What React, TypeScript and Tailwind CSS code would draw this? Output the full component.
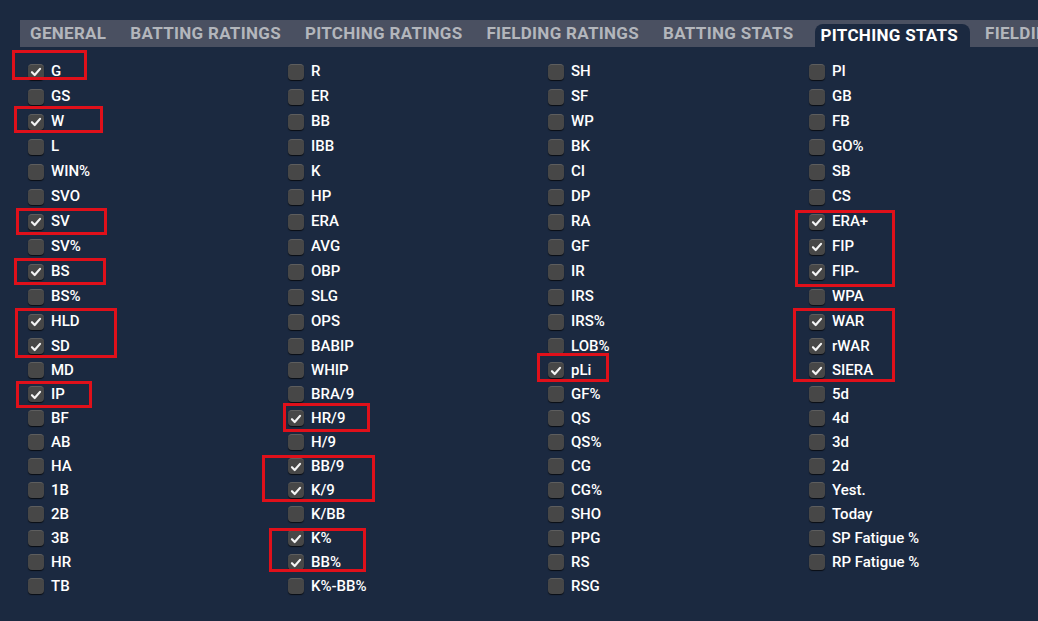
import React from 'react';

const TABS = [
  'GENERAL',
  'BATTING RATINGS',
  'PITCHING RATINGS',
  'FIELDING RATINGS',
  'BATTING STATS',
  'PITCHING STATS',
  'FIELDING STATS',
];
const ACTIVE_TAB = 'PITCHING STATS';

const COLUMNS: string[][] = [
  ['G', 'GS', 'W', 'L', 'WIN%', 'SVO', 'SV', 'SV%', 'BS', 'BS%', 'HLD', 'SD', 'MD', 'IP', 'BF', 'AB', 'HA', '1B', '2B', '3B', 'HR', 'TB'],
  ['R', 'ER', 'BB', 'IBB', 'K', 'HP', 'ERA', 'AVG', 'OBP', 'SLG', 'OPS', 'BABIP', 'WHIP', 'BRA/9', 'HR/9', 'H/9', 'BB/9', 'K/9', 'K/BB', 'K%', 'BB%', 'K%-BB%'],
  ['SH', 'SF', 'WP', 'BK', 'CI', 'DP', 'RA', 'GF', 'IR', 'IRS', 'IRS%', 'LOB%', 'pLi', 'GF%', 'QS', 'QS%', 'CG', 'CG%', 'SHO', 'PPG', 'RS', 'RSG'],
  ['PI', 'GB', 'FB', 'GO%', 'SB', 'CS', 'ERA+', 'FIP', 'FIP-', 'WPA', 'WAR', 'rWAR', 'SIERA', '5d', '4d', '3d', '2d', 'Yest.', 'Today', 'SP Fatigue %', 'RP Fatigue %'],
];

const CHECKED = new Set([
  'G', 'W', 'SV', 'BS', 'HLD', 'SD', 'IP',
  'HR/9', 'BB/9', 'K/9', 'K%', 'BB%',
  'pLi',
  'ERA+', 'FIP', 'FIP-', 'WAR', 'rWAR', 'SIERA',
]);

// annotation boxes drawn over the list: [left, top, width, height]
const MARKS: [number, number, number, number][] = [
  [12, 50, 75, 30],
  [14, 106, 89, 27],
  [16, 208, 91, 27],
  [14, 258, 92, 27],
  [15, 308, 102, 50],
  [16, 381, 76, 27],
  [283, 403, 87, 29],
  [262, 455, 113, 47],
  [269, 528, 97, 44],
  [537, 353, 72, 29],
  [795, 210, 100, 77],
  [793, 308, 102, 74],
];

const CheckBox: React.FC<{ checked: boolean }> = ({ checked }) => (
  <span className="flex h-[16px] w-[16px] shrink-0 items-center justify-center rounded-[4px] border-t border-[#5e5e5e] bg-[#474747] shadow-[0_1px_1px_rgba(0,0,0,0.7)]">
    {checked && (
      <svg viewBox="0 0 16 16" className="h-[14px] w-[14px]">
        <path d="M3.4 8.3 L6.5 11.4 L12.6 4.4" fill="none" stroke="#f4f4f4" strokeWidth="2.5" strokeLinecap="round" strokeLinejoin="round" />
      </svg>
    )}
  </span>
);

const App: React.FC = () => {
  return (
    <div
      className="relative h-[621px] w-[1038px] overflow-hidden bg-[#1b2940]"
      style={{ fontFamily: 'Roboto, "Liberation Sans", sans-serif' }}
    >
      <div className="ml-[20px] mt-[20px] flex h-[27px] items-end overflow-hidden whitespace-nowrap bg-[#4a5061]">
        {TABS.map((tab, i) =>
          tab === ACTIVE_TAB ? (
            <div
              key={tab}
              className="ml-[9px] mr-[3px] flex h-[23px] shrink-0 items-center rounded-t-[8px] bg-[#1b2940] pl-[6px] pr-[12px] text-[17px] font-bold leading-none tracking-[0.3px] text-white"
            >
              {tab}
            </div>
          ) : (
            <div
              key={tab}
              className={`flex h-[27px] shrink-0 items-center ${i === 0 ? 'pl-[10px]' : 'pl-[12px]'} pr-[12px] text-[17px] font-bold leading-none tracking-[0.3px] text-[#b3b6bc]`}
            >
              {tab}
            </div>
          ),
        )}
      </div>

      <div className="grid grid-cols-[260px_260px_261px_257px] pt-[12px]">
        {COLUMNS.map((col, ci) => (
          <div key={ci} className="flex flex-col">
            {col.map((label, ri) => (
              <div
                key={label}
                className={`flex items-center pl-[28px] ${ri < 11 ? 'h-[25px]' : 'h-[24px]'}`}
              >
                <CheckBox checked={CHECKED.has(label)} />
                <span className="ml-[7px] text-[15px] font-medium leading-none text-white">{label}</span>
              </div>
            ))}
          </div>
        ))}
      </div>

      {MARKS.map(([l, t, w, h], i) => (
        <div
          key={i}
          className="pointer-events-none absolute border-[3px] border-[#e0101a]"
          style={{ left: l, top: t, width: w, height: h }}
        />
      ))}
    </div>
  );
};

export default App;
